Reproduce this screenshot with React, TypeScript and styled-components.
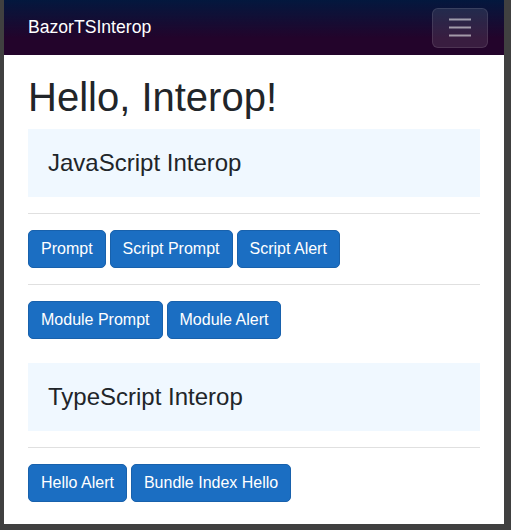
import styled, { createGlobalStyle } from "styled-components";

const GlobalStyle = createGlobalStyle`
  html, body {
    margin: 0;
    padding: 0;
    background: #404040;
  }
  body {
    font-family: "Liberation Sans", Arial, sans-serif;
    color: #212529;
  }
  * {
    box-sizing: border-box;
  }
`;

export default function App() {
  return (
    <>
      <GlobalStyle />
      <Frame>
        <Window>
          <TopRow>
            <Brand>BazorTSInterop</Brand>
            <Toggler aria-label="Navigation menu">
              <svg width="30" height="30" viewBox="0 0 30 30">
                <path
                  d="M4 6.5h22M4 14.5h22M4 22.5h22"
                  stroke="rgba(255,255,255,0.55)"
                  strokeWidth="2"
                />
              </svg>
            </Toggler>
          </TopRow>

          <Content>
            <Title>Hello, Interop!</Title>

            <Section>
              <Heading>JavaScript Interop</Heading>
            </Section>
            <Rule />
            <ButtonRow>
              <Button>Prompt</Button>
              <Button>Script Prompt</Button>
              <Button>Script Alert</Button>
            </ButtonRow>
            <Rule />
            <ButtonRow>
              <Button>Module Prompt</Button>
              <Button>Module Alert</Button>
            </ButtonRow>

            <Section $spaced>
              <Heading>TypeScript Interop</Heading>
            </Section>
            <Rule />
            <ButtonRow>
              <Button>Hello Alert</Button>
              <Button>Bundle Index Hello</Button>
            </ButtonRow>
          </Content>
        </Window>
      </Frame>
    </>
  );
}

const Frame = styled.div`
  width: 511px;
  height: 530px;
  padding-left: 4px;
`;

const Window = styled.div`
  width: 500px;
  height: 524px;
  background: #fff;
  overflow: hidden;
`;

const TopRow = styled.header`
  height: 55px;
  display: flex;
  align-items: center;
  justify-content: space-between;
  padding: 0 16px 0 24px;
  background:
    linear-gradient(rgba(0, 0, 0, 0.4), rgba(0, 0, 0, 0.4)),
    linear-gradient(180deg, rgb(5, 39, 103) 0%, #3a0647 70%);
`;

const Brand = styled.a`
  color: #fff;
  font-size: 17.6px;
  line-height: 1.5;
  text-decoration: none;
`;

const Toggler = styled.button`
  width: 56px;
  height: 40px;
  padding: 4px 12px;
  display: flex;
  align-items: center;
  justify-content: center;
  background: rgba(255, 255, 255, 0.1);
  border: 1px solid rgba(255, 255, 255, 0.1);
  border-radius: 6px;
`;

const Content = styled.main`
  padding: 18px 24px 0 24px;
`;

const Title = styled.h1`
  margin: 0 0 8px 0;
  font-size: 40px;
  font-weight: 400;
  line-height: 48px;
`;

const Section = styled.div<{ $spaced?: boolean }>`
  background: aliceblue;
  padding: 20px;
  margin-top: ${(p) => (p.$spaced ? "24px" : "0")};
`;

const Heading = styled.h4`
  margin: 0;
  font-size: 24px;
  font-weight: 400;
  line-height: 28px;
`;

const Rule = styled.hr`
  margin: 16px 0;
  border: 0;
  border-top: 1px solid #e0e0e0;
`;

const ButtonRow = styled.div`
  display: flex;
  gap: 4px;
`;

const Button = styled.button`
  font-family: "Liberation Sans", Arial, sans-serif;
  font-size: 16px;
  line-height: 24px;
  padding: 6px 12px;
  color: #fff;
  background: #1b6ec2;
  border: 1px solid #1861ac;
  border-radius: 5px;
`;
